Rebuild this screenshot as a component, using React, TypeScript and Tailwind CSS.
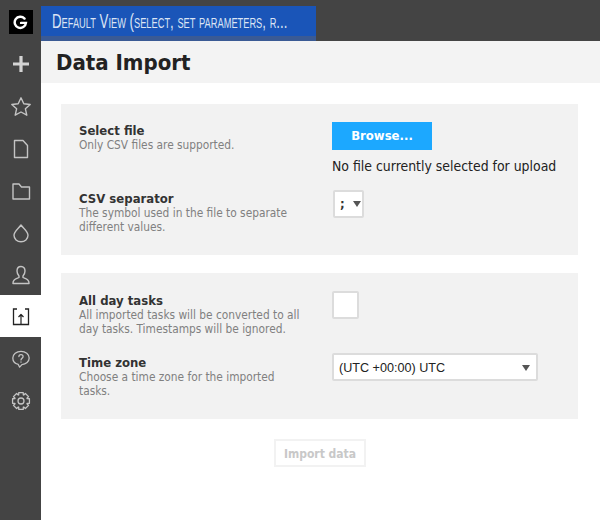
import React from "react";

const sans = "font-['DejaVu_Sans_Condensed','DejaVu_Sans',sans-serif]";

function Item({ active, flat, children }: { active?: boolean; flat?: boolean; children: React.ReactNode }) {
  return (
    <div className={`h-[42px] flex items-center justify-center ${flat ? "" : "pt-[2px]"} ${active ? "bg-white" : ""}`}>{children}</div>
  );
}

function Icon({ children, dark, size = 22 }: { children: React.ReactNode; dark?: boolean; size?: number }) {
  return (
    <svg width={size} height={size} viewBox="0 0 22 22" fill="none" stroke={dark ? "#222" : "#c4c4c4"} strokeWidth="1.4" strokeLinejoin="round" strokeLinecap="round">
      {children}
    </svg>
  );
}

function Label({ title, desc }: { title: string; desc: React.ReactNode }) {
  return (
    <div className="w-[253px] pt-[1px]">
      <div className="text-[13px] leading-[15px] font-bold text-[#333]">{title}</div>
      <div className="text-[11.8px] leading-[14px] text-[#808080]">{desc}</div>
    </div>
  );
}

function Arrow() {
  return <span className="block w-0 h-0 border-x-[4px] border-x-transparent border-t-[6px] border-t-[#555]" />;
}

function gearPath() {
  const pts: string[] = [];
  const n = 8;
  for (let i = 0; i < n; i++) {
    const a = (i / n) * Math.PI * 2 - Math.PI / 2;
    const w = 0.26;
    const p = (r: number, t: number) => `${(11 + r * Math.cos(t)).toFixed(2)} ${(11 + r * Math.sin(t)).toFixed(2)}`;
    pts.push(`${i === 0 ? "M" : "L"}${p(7.2, a - 0.36)}`, `L${p(9.6, a - w)}`, `L${p(9.6, a + w)}`, `L${p(7.2, a + 0.36)}`);
  }
  return pts.join(" ") + "Z";
}

export default function App() {
  return (
    <div className={`w-[600px] h-[520px] flex bg-white overflow-hidden ${sans}`}>
      <aside className="w-[41px] shrink-0 bg-[#444444] flex flex-col">
        <div className="h-[43px] flex items-start justify-center pt-[10px]">
          <div className="w-[24px] h-[24px] bg-black flex items-center justify-center">
            <svg width="15" height="15" viewBox="0 0 16 16" fill="none" stroke="#fff" strokeWidth="2.6" strokeLinecap="round">
              <path d="M12.300 3.800A6 6 0 1 0 13.800 8.400H8.600" />
            </svg>
          </div>
        </div>
        <Item flat>
          <svg width="18" height="18" viewBox="0 0 18 18" fill="#d4d4d4"><path d="M7.400 1h3.200v6.400H17v3.200h-6.400V17H7.400v-6.400H1V7.400h6.400z" /></svg>
        </Item>
        <Item><Icon><path d="M11 1.800l2.800 6 6.400.7-4.800 4.300 1.400 6.400L11 16l-5.800 3.200 1.400-6.400-4.800-4.300 6.400-.7z" /></Icon></Item>
        <Item><Icon><path d="M4.500 2.500h8.500l4.500 5v12h-13z" /></Icon></Item>
        <Item><Icon><path d="M3 4h6l2.500 3h8v12H3z" /></Icon></Item>
        <Item><Icon><path d="M11 3c2.500 3.500 7 6.500 7 10.300a7 6.500 0 0 1-14 0C4 9.500 8.500 6.500 11 3z" /></Icon></Item>
        <Item><Icon><path d="M11 2.500c-2.700 0-4 2-4 4.500 0 2.500 1.100 4 2 5v1.500c-1.500 1-6 1.500-6 5.500v.5h16V19c0-4-4.500-4.500-6-5.500V12c.900-1 2-2.500 2-5 0-2.500-1.300-4.500-4-4.500z" /></Icon></Item>
        <Item active>
          <Icon dark>
            <path d="M7 3H3.500v15.500h15V3H15" strokeWidth="1.300" strokeLinecap="butt" strokeLinejoin="miter" />
            <path d="M11 18V8.500M8.500 11L11 8.500l2.500 2.500" strokeWidth="1.200" strokeLinecap="butt" />
          </Icon>
        </Item>
        <Item>
          <Icon size={20}>
            <path d="M11 2.500c-5 0-9 3.200-9 7.500 0 3.500 2.600 6.200 6 7l1.500 3 2.500-2.800c4.500-.300 8-3.300 8-7.200 0-4.300-4-7.500-9-7.500z" />
            <path d="M8.700 8.300c0-1.300 1-2.200 2.300-2.200s2.300.9 2.300 2.100c0 1.900-2.300 1.900-2.300 3.800M11 14.200v.3" />
          </Icon>
        </Item>
        <Item>
          <Icon size={20}>
            <path d={gearPath()} />
            <circle cx="11" cy="11" r="3.300" />
          </Icon>
        </Item>
        <div className="flex-1" />
      </aside>

      <main className="flex-1 min-w-0 flex flex-col">
        <header className="h-[41px] shrink-0 bg-[#444444] pt-[6px]">
          <div className="w-[275px] h-[35px] bg-[#3a5a94] overflow-hidden">
            <div className="h-[30px] bg-[#1a55b8] pl-[11px] flex items-center whitespace-nowrap overflow-hidden">
              <span className="block origin-left scale-x-[0.662] text-[#dbe4f4] text-[20px] [font-variant:small-caps] font-['Liberation_Sans',sans-serif]">
                Default View (select, set parameters, r...
              </span>
            </div>
          </div>
        </header>
        <div className="h-[42px] shrink-0 bg-[#f3f3f3] pl-[15px] flex items-center text-[22px] font-bold text-[#222]">
          Data Import
        </div>

        <section className="mt-[21px] ml-[20px] w-[517px] h-[151px] bg-[#f2f2f2] pl-[18px] pt-[18px]">
          <div className="flex h-[68px]">
            <Label title="Select file" desc="Only CSV files are supported." />
            <div>
              <div className="w-[100px] h-[28px] bg-[#1ca8ff] text-white text-[13px] font-bold flex items-center justify-center">Browse...</div>
              <div className="mt-[9px] text-[13.9px] leading-[15px] text-[#222] whitespace-nowrap">No file currently selected for upload</div>
            </div>
          </div>
          <div className="flex">
            <Label title="CSV separator" desc={<>The symbol used in the file to separate<br />different values.</>} />
            <div className="ml-[1px] w-[31px] h-[28px] bg-white border-2 border-[#dcdcdc] rounded-[2px] flex items-center gap-[8px] pl-[5px] text-[13px] font-bold text-[#333]">
              <span>;</span><Arrow />
            </div>
          </div>
        </section>

        <section className="mt-[18px] ml-[20px] w-[517px] h-[146px] bg-[#f2f2f2] pl-[18px] pt-[19px]">
          <div className="flex h-[62px]">
            <Label title="All day tasks" desc={<>All imported tasks will be converted to all<br />day tasks. Timestamps will be ignored.</>} />
            <div className="-mt-[1px] w-[27px] h-[28px] bg-white border-2 border-[#dcdcdc] rounded-[2px]" />
          </div>
          <div className="flex">
            <Label title="Time zone" desc={<>Choose a time zone for the imported<br />tasks.</>} />
            <div className="-mt-[1px] w-[206px] h-[28px] bg-white border-2 border-[#dcdcdc] rounded-[2px] flex items-center justify-between pl-[5px] pr-[6px] pt-[2px] text-[12.6px] text-[#222] font-['Liberation_Sans',sans-serif]">
              <span>(UTC +00:00) UTC</span><Arrow />
            </div>
          </div>
        </section>

        <div className="mt-[20px] ml-[233px] w-[92px] h-[28px] pt-[1px] border-2 border-[#f2f2f2] flex items-center justify-center text-[12px] font-bold text-[#c8c8c8]">
          Import data
        </div>
      </main>
    </div>
  );
}
